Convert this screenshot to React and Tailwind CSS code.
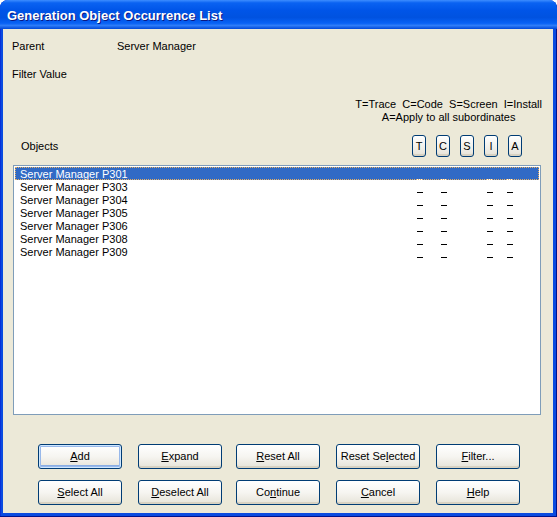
import React from "react";

const rows = [
  "Server Manager P301",
  "Server Manager P303",
  "Server Manager P304",
  "Server Manager P305",
  "Server Manager P306",
  "Server Manager P308",
  "Server Manager P309",
];

// XP style push button
const XpButton = ({ children, def, className = "" }) => (
  <button
    className={`h-[25px] w-[84px] rounded-[3px] border border-[#003C74] bg-linear-to-b from-white via-[#F6F5F1] to-[#E6E3D8] text-[11px] text-black leading-none ${className} ${
      def
        ? "shadow-[inset_0_0_0_1px_#CEE7FF,inset_0_0_0_2px_#98B8EA,inset_0_-3px_0_#89ADE4]"
        : "shadow-[inset_0_-2px_0_#D8D2C2]"
    }`}
  >
    {children}
  </button>
);

const FlagButton = ({ label }) => (
  <button className="h-[22px] w-[14px] rounded-[3px] border border-[#003C74] bg-linear-to-b from-white to-[#E6E3D8] text-[11px] leading-none text-black shadow-[inset_0_-2px_0_#D8D2C2]">
    {label}
  </button>
);

const Dashes = ({ color }) => (
  <>
    <div className={`ml-0 mt-[12px] h-px w-[6px] ${color}`} />
    <div className={`ml-[18px] mt-[12px] h-px w-[6px] ${color}`} />
    <div className={`ml-[40px] mt-[12px] h-px w-[6px] ${color}`} />
    <div className={`ml-[14px] mt-[12px] h-px w-[6px] ${color}`} />
  </>
);

export default function App() {
  return (
    <div
      className="flex h-[517px] w-[557px] flex-col overflow-hidden rounded-t-[8px] bg-[#0A4BE0] shadow-[inset_-1px_-1px_0_#00138C,inset_1px_0_0_#0831D9]"
      style={{ fontFamily: '"Liberation Sans", Arial, sans-serif' }}
    >
      {/* Title bar */}
      <div className="flex h-[29px] items-center bg-[linear-gradient(to_bottom,#3D8DFF_0%,#0A62F2_10%,#0055E8_35%,#0052E0_60%,#0761F5_80%,#2E7CF8_88%,#0048D8_100%)] pl-[7px] pt-[2px]">
        <span className="text-[13px] font-bold text-white [text-shadow:1px_1px_#0A1883]">
          Generation Object Occurrence List
        </span>
      </div>

      {/* Body */}
      <div className="mb-[4px] ml-[3px] mr-[4px] flex flex-1 flex-col bg-[#ECE9D8] text-[11px] leading-[13px] text-black">
        <div className="mt-[11px] flex pl-[9px]">
          <span className="w-[105px]">Parent</span>
          <span>Server Manager</span>
        </div>
        <div className="mt-[15px] pl-[9px]">Filter Value</div>

        <div className="mr-[11px] mt-[17px] self-end text-center">
          <div className="whitespace-pre">T=Trace  C=Code  S=Screen  I=Install</div>
          <div>A=Apply to all subordinates</div>
        </div>

        <div className="mt-[11px] flex items-center pl-[18px] pr-[31px]">
          <span className="flex-1">Objects</span>
          <div className="flex gap-[10px]">
            {["T", "C", "S", "I", "A"].map((l) => (
              <FlagButton key={l} label={l} />
            ))}
          </div>
        </div>

        {/* List */}
        <div className="ml-[10px] mt-[8px] h-[250px] w-[528px] border border-[#7F9DB9] bg-white p-[1px]">
          {rows.map((r, i) => (
            <div
              key={r}
              className={`flex h-[13px] ${
                i === 0
                  ? "bg-[#316AC5] text-white outline-1 outline-dotted outline-[#E8B060] -outline-offset-1"
                  : ""
              }`}
            >
              <span className="w-[402px] pl-[5px] pt-px">{r}</span>
              <Dashes color={i === 0 ? "bg-white" : "bg-black"} />
            </div>
          ))}
        </div>

        {/* Buttons */}
        <div className="ml-[35px] mt-[29px] flex gap-[16px]">
          <XpButton def>
            <u>A</u>dd
          </XpButton>
          <XpButton>
            <u>E</u>xpand
          </XpButton>
          <XpButton className="-ml-[2px]">
            <u>R</u>eset All
          </XpButton>
          <XpButton>
            Reset Se<u>l</u>ected
          </XpButton>
          <XpButton>
            <u>F</u>ilter...
          </XpButton>
        </div>
        <div className="ml-[35px] mt-[11px] flex gap-[16px]">
          <XpButton>
            <u>S</u>elect All
          </XpButton>
          <XpButton>
            <u>D</u>eselect All
          </XpButton>
          <XpButton className="-ml-[2px]">
            Co<u>n</u>tinue
          </XpButton>
          <XpButton>
            <u>C</u>ancel
          </XpButton>
          <XpButton>
            <u>H</u>elp
          </XpButton>
        </div>
      </div>
    </div>
  );
}
